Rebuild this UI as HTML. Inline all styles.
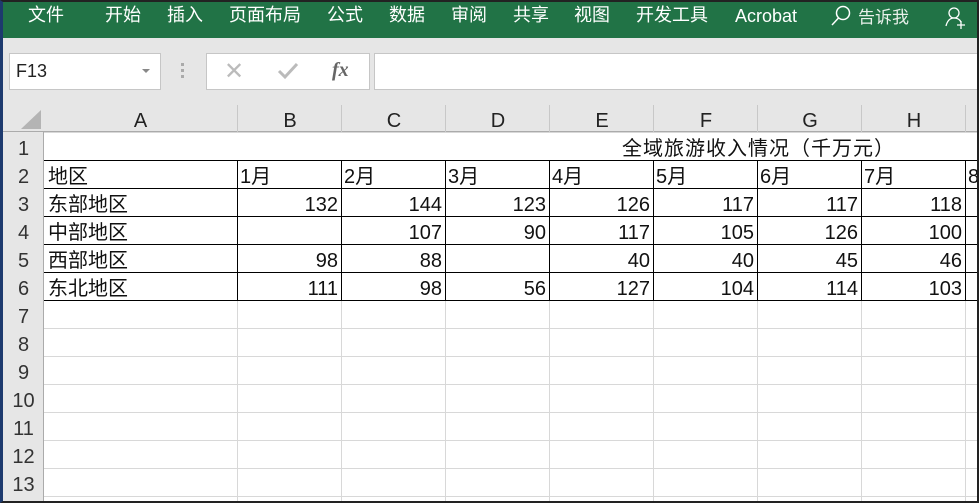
<!DOCTYPE html><html><head><meta charset="utf-8"><style>
body{margin:0;width:979px;height:503px;overflow:hidden;background:#fff;font-family:"Liberation Sans","Noto Sans CJK SC",sans-serif;position:relative}
.a{position:absolute}
.tab{position:absolute;top:4px;color:#fff;font-size:18px;line-height:22px}
.c{position:absolute;height:28px;line-height:34px;font-size:20px;color:#111;white-space:nowrap}
.r{text-align:right}
.rh{position:absolute;left:3px;width:41px;text-align:center;font-size:20px;color:#333;line-height:34px;height:28px}
.ch{position:absolute;top:105px;height:27px;line-height:32px;text-align:center;font-size:20px;color:#222}
</style></head><body>
<div class="a" style="left:0;top:0;width:979px;height:38px;background:#217346"></div>
<div class="tab" style="left:28px">文件</div>
<div class="tab" style="left:105px">开始</div>
<div class="tab" style="left:167px">插入</div>
<div class="tab" style="left:229px">页面布局</div>
<div class="tab" style="left:327px">公式</div>
<div class="tab" style="left:389px">数据</div>
<div class="tab" style="left:451px">审阅</div>
<div class="tab" style="left:513px">共享</div>
<div class="tab" style="left:574px">视图</div>
<div class="tab" style="left:636px">开发工具</div>
<div class="tab" style="left:735px;top:5px">Acrobat</div>
<svg class="a" style="left:828px;top:4px" width="24" height="24"><circle cx="15" cy="9" r="6.5" fill="none" stroke="#fff" stroke-width="1.5"/><line x1="10.5" y1="14" x2="4" y2="21" stroke="#fff" stroke-width="1.5"/></svg>
<div class="tab" style="left:858px;top:7px;color:#e8f0ea;font-size:17px">告诉我</div>
<svg class="a" style="left:944px;top:6px" width="26" height="24"><circle cx="10" cy="7" r="5" fill="none" stroke="#fff" stroke-width="1.3"/><path d="M2 20 Q4 12 10 12 Q15 12 17 16" fill="none" stroke="#fff" stroke-width="1.3"/><path d="M17 15v8M13 19h8" stroke="#fff" stroke-width="1.3"/></svg>
<div class="a" style="left:0;top:38px;width:979px;height:67px;background:#e6e6e6"></div>
<div class="a" style="left:9px;top:53px;width:150px;height:35px;background:#fff;border:1px solid #c6c6c6"></div>
<div class="a" style="left:16px;top:61px;font-size:18px;color:#222">F13</div>
<div class="a" style="left:142px;top:69px;border-left:4px solid transparent;border-right:4px solid transparent;border-top:4px solid #888"></div>
<div class="a" style="left:181px;top:63px;width:3px;height:15px;background:repeating-linear-gradient(#aaa 0 3px,transparent 3px 6px)"></div>
<div class="a" style="left:206px;top:53px;width:162px;height:35px;background:#fff;border:1px solid #c6c6c6"></div>
<div class="a" style="left:224px;top:57px;font-size:24px;color:#bbb">✕</div>
<svg class="a" style="left:277px;top:62px" width="22" height="18"><path d="M2 9l6 6L20 2" fill="none" stroke="#bbb" stroke-width="3"/></svg>
<div class="a" style="left:332px;top:59px;font-family:'Liberation Serif',serif;font-style:italic;font-weight:bold;font-size:20px;color:#666">fx</div>
<div class="a" style="left:374px;top:53px;width:610px;height:35px;background:#fff;border:1px solid #c6c6c6"></div>
<div class="a" style="left:0;top:105px;width:979px;height:27px;background:#e6e6e6;border-bottom:1px solid #ababab;box-sizing:border-box"></div>
<div class="a" style="left:0;top:132px;width:44px;height:371px;background:#e6e6e6;border-right:1px solid #ababab;box-sizing:border-box"></div>
<svg class="a" style="left:20px;top:110px" width="22" height="20"><path d="M21 0V19H1Z" fill="#b4b4b4"/></svg>
<div class="a" style="left:44px;top:132px;width:935px;height:371px;background-color:#fff;background-image:linear-gradient(#d8d8d8 1px,transparent 1px);background-size:100% 28px;background-position:0 0"></div>
<div class="ch" style="left:44px;width:193px">A</div>
<div class="ch" style="left:237px;width:104px;border-left:1px solid #c8c8c8">B</div>
<div class="ch" style="left:341px;width:104px;border-left:1px solid #c8c8c8">C</div>
<div class="ch" style="left:445px;width:104px;border-left:1px solid #c8c8c8">D</div>
<div class="ch" style="left:549px;width:104px;border-left:1px solid #c8c8c8">E</div>
<div class="ch" style="left:653px;width:104px;border-left:1px solid #c8c8c8">F</div>
<div class="ch" style="left:757px;width:104px;border-left:1px solid #c8c8c8">G</div>
<div class="ch" style="left:861px;width:104px;border-left:1px solid #c8c8c8">H</div>
<div class="ch" style="left:965px;width:14px;border-left:1px solid #c8c8c8"></div>
<div class="a" style="left:237px;top:300px;width:1px;height:203px;background:#d8d8d8"></div>
<div class="a" style="left:341px;top:300px;width:1px;height:203px;background:#d8d8d8"></div>
<div class="a" style="left:445px;top:300px;width:1px;height:203px;background:#d8d8d8"></div>
<div class="a" style="left:549px;top:300px;width:1px;height:203px;background:#d8d8d8"></div>
<div class="a" style="left:653px;top:300px;width:1px;height:203px;background:#d8d8d8"></div>
<div class="a" style="left:757px;top:300px;width:1px;height:203px;background:#d8d8d8"></div>
<div class="a" style="left:861px;top:300px;width:1px;height:203px;background:#d8d8d8"></div>
<div class="a" style="left:965px;top:300px;width:1px;height:203px;background:#d8d8d8"></div>
<div class="a" style="left:44px;top:160px;width:935px;height:141px;background-image:linear-gradient(#000 1px,transparent 1px);background-size:100% 28px"></div>
<div class="a" style="left:44px;top:300px;width:935px;height:1px;background:#000"></div>
<div class="a" style="left:237px;top:160px;width:1px;height:140px;background:#000"></div>
<div class="a" style="left:341px;top:160px;width:1px;height:140px;background:#000"></div>
<div class="a" style="left:445px;top:160px;width:1px;height:140px;background:#000"></div>
<div class="a" style="left:549px;top:160px;width:1px;height:140px;background:#000"></div>
<div class="a" style="left:653px;top:160px;width:1px;height:140px;background:#000"></div>
<div class="a" style="left:757px;top:160px;width:1px;height:140px;background:#000"></div>
<div class="a" style="left:861px;top:160px;width:1px;height:140px;background:#000"></div>
<div class="a" style="left:965px;top:160px;width:1px;height:140px;background:#000"></div>
<div class="rh" style="top:132px">1</div><div class="rh" style="top:160px">2</div><div class="rh" style="top:188px">3</div><div class="rh" style="top:216px">4</div><div class="rh" style="top:244px">5</div><div class="rh" style="top:272px">6</div><div class="rh" style="top:300px">7</div><div class="rh" style="top:328px">8</div><div class="rh" style="top:356px">9</div><div class="rh" style="top:384px">10</div><div class="rh" style="top:412px">11</div><div class="rh" style="top:440px">12</div><div class="rh" style="top:468px">13</div>
<div class="c" style="left:622px;top:132px;letter-spacing:1px">全域旅游收入情况（千万元）</div>
<div class="c" style="left:48px;top:160px">地区</div>
<div class="c" style="left:240px;top:160px">1月</div><div class="c" style="left:344px;top:160px">2月</div><div class="c" style="left:448px;top:160px">3月</div><div class="c" style="left:552px;top:160px">4月</div><div class="c" style="left:656px;top:160px">5月</div><div class="c" style="left:760px;top:160px">6月</div><div class="c" style="left:864px;top:160px">7月</div><div class="c" style="left:968px;top:160px">8</div>
<div class="c" style="left:48px;top:188px">东部地区</div><div class="c" style="left:48px;top:216px">中部地区</div><div class="c" style="left:48px;top:244px">西部地区</div><div class="c" style="left:48px;top:272px">东北地区</div>
<div class="c r" style="left:237px;width:101px;top:188px">132</div><div class="c r" style="left:341px;width:101px;top:188px">144</div><div class="c r" style="left:445px;width:101px;top:188px">123</div><div class="c r" style="left:549px;width:101px;top:188px">126</div><div class="c r" style="left:653px;width:101px;top:188px">117</div><div class="c r" style="left:757px;width:101px;top:188px">117</div><div class="c r" style="left:861px;width:101px;top:188px">118</div>
<div class="c r" style="left:341px;width:101px;top:216px">107</div><div class="c r" style="left:445px;width:101px;top:216px">90</div><div class="c r" style="left:549px;width:101px;top:216px">117</div><div class="c r" style="left:653px;width:101px;top:216px">105</div><div class="c r" style="left:757px;width:101px;top:216px">126</div><div class="c r" style="left:861px;width:101px;top:216px">100</div>
<div class="c r" style="left:237px;width:101px;top:244px">98</div><div class="c r" style="left:341px;width:101px;top:244px">88</div><div class="c r" style="left:549px;width:101px;top:244px">40</div><div class="c r" style="left:653px;width:101px;top:244px">40</div><div class="c r" style="left:757px;width:101px;top:244px">45</div><div class="c r" style="left:861px;width:101px;top:244px">46</div>
<div class="c r" style="left:237px;width:101px;top:272px">111</div><div class="c r" style="left:341px;width:101px;top:272px">98</div><div class="c r" style="left:445px;width:101px;top:272px">56</div><div class="c r" style="left:549px;width:101px;top:272px">127</div><div class="c r" style="left:653px;width:101px;top:272px">104</div><div class="c r" style="left:757px;width:101px;top:272px">114</div><div class="c r" style="left:861px;width:101px;top:272px">103</div>
<div class="a" style="left:0;top:0;width:979px;height:503px;box-sizing:border-box;border:2px solid #222;border-left:3px solid #1d3a6e;pointer-events:none"></div>
</body></html>
